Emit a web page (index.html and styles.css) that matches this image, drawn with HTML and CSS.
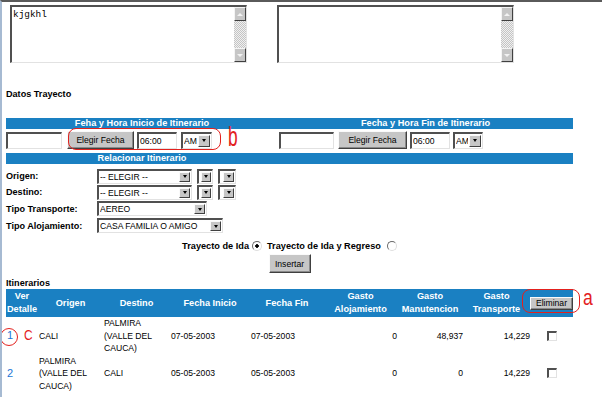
FILE: index.html
```html
<!DOCTYPE html>
<html lang="es">
<head>
  <meta charset="UTF-8">
  <title>Datos Trayecto</title>
  <link rel="stylesheet" href="styles.css">
</head>
<body>
<div class="page">

  <!-- Observaciones -->
  <div class="notes">
    <div class="memo">
      <textarea>kjgkhl</textarea>
      <div class="vscroll"><span class="sb-btn sb-up"></span><span class="sb-track"></span><span class="sb-btn sb-down"></span></div>
    </div>
    <div class="memo">
      <textarea></textarea>
      <div class="vscroll"><span class="sb-btn sb-up"></span><span class="sb-track"></span><span class="sb-btn sb-down"></span></div>
    </div>
  </div>

  <h2 class="section-title">Datos Trayecto</h2>

  <!-- Fechas -->
  <table class="form-grid">
    <colgroup><col class="col-start"><col class="col-end"></colgroup>
    <tr>
      <th>Feha y Hora Inicio de Itinerario</th>
      <th>Fecha y Hora Fin de Itinerario</th>
    </tr>
    <tr>
      <td>
        <div class="date-line">
          <input class="field field-date" type="text">
          <button class="btn btn-pick">Elegir Fecha</button>
          <input class="field field-time" type="text" value="06:00">
          <span class="sel sel-ampm"><select><option>AM</option></select><span class="sel-arrow"></span></span>
        </div>
      </td>
      <td>
        <div class="date-line date-line-end">
          <input class="field field-date" type="text">
          <button class="btn btn-pick">Elegir Fecha</button>
          <input class="field field-time" type="text" value="06:00">
          <span class="sel sel-ampm"><select><option>AM</option></select><span class="sel-arrow"></span></span>
        </div>
      </td>
    </tr>
    <tr>
      <th>Relacionar Itinerario</th>
      <th></th>
    </tr>
  </table>

  <table class="rel-grid">
    <tr class="row-short">
      <td class="lbl">Origen:</td>
      <td>
        <div class="sel-group">
          <span class="sel sel-place"><select><option>-- ELEGIR --</option></select><span class="sel-arrow"></span></span>
          <span class="sel sel-mini"><select><option></option></select><span class="sel-arrow"></span></span>
          <span class="sel sel-mini2"><select><option></option></select><span class="sel-arrow"></span></span>
        </div>
      </td>
    </tr>
    <tr class="row-short">
      <td class="lbl">Destino:</td>
      <td>
        <div class="sel-group">
          <span class="sel sel-place"><select><option>-- ELEGIR --</option></select><span class="sel-arrow"></span></span>
          <span class="sel sel-mini"><select><option></option></select><span class="sel-arrow"></span></span>
          <span class="sel sel-mini2"><select><option></option></select><span class="sel-arrow"></span></span>
        </div>
      </td>
    </tr>
    <tr>
      <td class="lbl">Tipo Transporte:</td>
      <td><span class="sel sel-transport"><select><option>AEREO</option></select><span class="sel-arrow"></span></span></td>
    </tr>
    <tr>
      <td class="lbl">Tipo Alojamiento:</td>
      <td><span class="sel sel-lodging"><select><option>CASA FAMILIA O AMIGO</option></select><span class="sel-arrow"></span></span></td>
    </tr>
  </table>

  <div class="trip-type">
    <span>Trayecto de Ida</span>
    <input class="radio" type="radio" name="trayecto" checked>
    <span class="trip-round">Trayecto de Ida y Regreso</span>
    <input class="radio radio-last" type="radio" name="trayecto">
  </div>
  <div class="insert-line">
    <button class="btn btn-insert">Insertar</button>
  </div>

  <!-- Itinerarios -->
  <h3 class="list-title">Itinerarios</h3>
  <table class="itin">
    <colgroup>
      <col class="c-ver"><col class="c-origen"><col class="c-destino"><col class="c-ini"><col class="c-fin">
      <col class="c-aloj"><col class="c-manu"><col class="c-trans"><col class="c-del">
    </colgroup>
    <thead>
      <tr>
        <th>Ver Detalle</th>
        <th>Origen</th>
        <th>Destino</th>
        <th>Fecha Inicio</th>
        <th>Fecha Fin</th>
        <th>Gasto Alojamiento</th>
        <th>Gasto Manutencion</th>
        <th>Gasto Transporte</th>
        <th><button class="btn btn-delete">Eliminar</button></th>
      </tr>
    </thead>
    <tbody>
      <tr>
        <td><a class="detail-link" href="#">1</a></td>
        <td>CALI</td>
        <td>PALMIRA (VALLE DEL CAUCA)</td>
        <td>07-05-2003</td>
        <td>07-05-2003</td>
        <td class="num">0</td>
        <td class="num">48,937</td>
        <td class="num">14,229</td>
        <td class="chk-cell"><input class="chk" type="checkbox"></td>
      </tr>
      <tr>
        <td><a class="detail-link" href="#">2</a></td>
        <td>PALMIRA (VALLE DEL CAUCA)</td>
        <td>CALI</td>
        <td>05-05-2003</td>
        <td>05-05-2003</td>
        <td class="num">0</td>
        <td class="num">0</td>
        <td class="num">14,229</td>
        <td class="chk-cell"><input class="chk" type="checkbox"></td>
      </tr>
    </tbody>
  </table>

  <!-- Marcas de revision -->
  <span class="mark mark-b"></span>
  <span class="mark-letter letter-b">b</span>
  <span class="mark mark-a"></span>
  <span class="mark-letter letter-a">a</span>
  <span class="mark mark-c"></span>
  <span class="mark-letter letter-c">C</span>

</div>
</body>
</html>
```

FILE: styles.css
```css
* {
  box-sizing: border-box;
}

body {
  margin: 0;
  min-height: 397px;
  border-top: 2px solid #5a5a5a;
  border-left: 2px solid #a6bad2;
  background: #fff;
  color: #000;
  font-family: "Liberation Sans", Arial, sans-serif;
  font-size: 8.6px;
}

.page {
  position: relative;
  padding-left: 4px;
}

/* Observaciones */
.notes {
  display: flex;
  gap: 30px;
  padding: 3px 0 0 4px;
}

.memo {
  display: flex;
  width: 237px;
  height: 58px;
  border-style: solid;
  border-width: 2px 1px 1px 2px;
  border-color: #505050 #e2e2e2 #e2e2e2 #505050;
  background: #fff;
}

.memo textarea {
  flex: 1;
  min-width: 0;
  border: 0;
  margin: 0;
  padding: 3px 1px 0;
  resize: none;
  overflow: hidden;
  outline: none;
  color: #000;
  font-family: "Liberation Mono", monospace;
  font-size: 9.4px;
  line-height: 10px;
}

.vscroll {
  width: 12px;
  display: flex;
  flex-direction: column;
}

.sb-btn {
  height: 14px;
  display: flex;
  align-items: center;
  justify-content: center;
  background: #c6c6c6;
  border: 1px solid;
  border-color: #f4f4f4 #404040 #404040 #f4f4f4;
}

.sb-btn::after {
  content: "";
  border-left: 3px solid transparent;
  border-right: 3px solid transparent;
}

.sb-up::after {
  border-bottom: 3px solid #f2f2f2;
}

.sb-down::after {
  border-top: 3px solid #f2f2f2;
}

.sb-track {
  flex: 1;
  background: repeating-conic-gradient(#c4c4c4 0 25%, #f0f0f0 0 50%) 0 0 / 2px 2px;
}

/* Titles */
.section-title,
.list-title {
  margin: 0;
  font-size: 9.1px;
  font-weight: bold;
  line-height: 12px;
}

.section-title {
  margin-top: 25px;
}

.list-title {
  margin-top: 5px;
  line-height: 11px;
}

/* Form controls, windows style */
.field,
.sel {
  border-style: solid;
  border-width: 2px 1px 1px 2px;
  border-color: #505050 #e2e2e2 #e2e2e2 #505050;
  background: #fff;
}

.field {
  height: 17px;
  margin: 0;
  padding: 0 1px;
  color: #000;
  font-family: "Liberation Sans", Arial, sans-serif;
  font-size: 8.6px;
  outline: none;
}

.btn {
  margin: 0;
  padding: 0;
  background: #c6c6c6;
  border: 1px solid;
  border-color: #fafafa #404040 #404040 #fafafa;
  box-shadow: inset -1px -1px #8a8a8a;
  color: #000;
  font-family: "Liberation Sans", Arial, sans-serif;
  font-size: 8.6px;
}

.sel {
  display: inline-flex;
  align-items: stretch;
  height: 15px;
  vertical-align: middle;
}

.sel select {
  flex: 1;
  min-width: 0;
  appearance: none;
  border: 0;
  margin: 0;
  padding: 0 1px;
  background: transparent;
  color: #000;
  font-family: "Liberation Sans", Arial, sans-serif;
  font-size: 8.6px;
  outline: none;
}

.sel-arrow {
  width: 11px;
  margin: 1px 1px 1px 0;
  display: flex;
  align-items: center;
  justify-content: center;
  background: #c6c6c6;
  border: 1px solid;
  border-color: #fafafa #404040 #404040 #fafafa;
}

.sel-arrow::after {
  content: "";
  border-left: 2.5px solid transparent;
  border-right: 2.5px solid transparent;
  border-top: 3px solid #000;
}

/* Fechas */
.form-grid {
  width: 567px;
  margin-top: 18px;
  border-collapse: collapse;
  table-layout: fixed;
}

.col-start {
  width: 272px;
}

.col-end {
  width: 295px;
}

.form-grid th {
  height: 11px;
  padding: 0;
  background: #1a80c2;
  color: #fff;
  font-size: 9.2px;
  line-height: 11px;
  text-align: center;
}

.form-grid td {
  padding: 2px 0 4px;
}

.date-line {
  display: flex;
  align-items: center;
}

.date-line-end {
  padding-left: 1px;
}

.field-date {
  width: 56px;
}

.date-line-end .field-date {
  width: 55px;
}

.btn-pick {
  width: 67px;
  height: 18px;
  margin-left: 5px;
}

.date-line-end .btn-pick {
  width: 69px;
  margin-left: 4px;
}

.field-time {
  width: 40px;
  margin-left: 3px;
}

.sel-ampm {
  width: 31px;
  height: 17px;
  margin-left: 4px;
}

.date-line-end .sel-ampm {
  width: 30px;
  margin-left: 3px;
}

.sel-ampm .sel-arrow {
  width: 12px;
}

/* Relacionar */
.rel-grid {
  margin-top: 4px;
  border-collapse: collapse;
}

.rel-grid td {
  height: 17px;
  padding: 0;
  vertical-align: middle;
}

.rel-grid .row-short td {
  height: 16px;
}

.rel-grid .lbl {
  width: 91px;
  font-size: 9.1px;
  font-weight: bold;
}

.sel-group {
  display: flex;
  gap: 5px;
}

.sel-place {
  width: 95px;
}

.sel-mini {
  width: 16px;
}

.sel-mini2 {
  width: 18px;
}

.sel-transport {
  width: 110px;
}

.sel-lodging {
  width: 126px;
}

.trip-type {
  width: 567px;
  height: 13px;
  margin-top: 5px;
  display: flex;
  align-items: center;
  justify-content: center;
  font-size: 9.2px;
  font-weight: bold;
}

.radio {
  appearance: none;
  width: 10px;
  height: 10px;
  margin: 0 0 0 3px;
  border-radius: 50%;
  border: 1px solid;
  border-color: #6a6a6a #dedede #dedede #6a6a6a;
  background: #fff;
}

.radio:checked {
  background: radial-gradient(circle, #000 0 1.5px, #fff 2px);
}

.trip-round {
  margin-left: 5px;
}

.radio-last {
  margin-left: 6px;
}

.insert-line {
  width: 567px;
  margin-top: 2px;
  display: flex;
  justify-content: center;
}

.btn-insert {
  width: 42px;
  height: 19px;
}

/* Itinerarios */
.itin {
  width: 567px;
  border-collapse: collapse;
  table-layout: fixed;
}

.c-ver { width: 32px; }
.c-origen { width: 65px; }
.c-destino { width: 67px; }
.c-ini { width: 80px; }
.c-fin { width: 74px; }
.c-aloj { width: 73px; }
.c-manu { width: 66px; }
.c-trans { width: 67px; }
.c-del { width: 43px; }

.itin th {
  height: 28px;
  padding: 1px 0;
  background: #1a80c2;
  color: #fff;
  font-size: 9.2px;
  line-height: 13px;
  text-align: center;
  vertical-align: middle;
}

.itin td {
  padding: 0 0 0 1px;
  line-height: 12.5px;
  vertical-align: middle;
}

.itin td.num {
  padding: 0;
  text-align: right;
}

.itin td.chk-cell {
  text-align: center;
}

.btn-delete {
  display: block;
  width: 43px;
  height: 13px;
  line-height: 10px;
}

.detail-link {
  color: #2276d6;
  text-decoration: none;
  font-size: 11px;
}

.chk {
  appearance: none;
  display: block;
  width: 10px;
  height: 10px;
  margin: 0 auto;
  border-style: solid;
  border-width: 2px 1px 1px 2px;
  border-color: #505050 #e2e2e2 #e2e2e2 #505050;
  background: #fff;
}

/* Marcas de revision */
.mark {
  position: absolute;
  border: 1.5px solid #e3211e;
  border-radius: 8px;
}

.mark-b {
  left: 66px;
  top: 126px;
  width: 153px;
  height: 22px;
}

.mark-a {
  left: 520px;
  top: 287px;
  width: 58px;
  height: 24px;
}

.mark-c {
  left: -2px;
  top: 326px;
  width: 18px;
  height: 18px;
  border-radius: 50%;
}

.mark-letter {
  position: absolute;
  color: #e3211e;
  font-family: "Liberation Sans", sans-serif;
  line-height: 1;
  transform-origin: left top;
}

.letter-b {
  left: 226px;
  top: 121px;
  font-size: 28px;
  transform: scaleX(0.62);
}

.letter-a {
  left: 581px;
  top: 285px;
  font-size: 22px;
  transform: scaleX(0.8);
}

.letter-c {
  left: 22px;
  top: 326px;
  font-size: 14px;
  transform: scaleX(0.85);
}
```
